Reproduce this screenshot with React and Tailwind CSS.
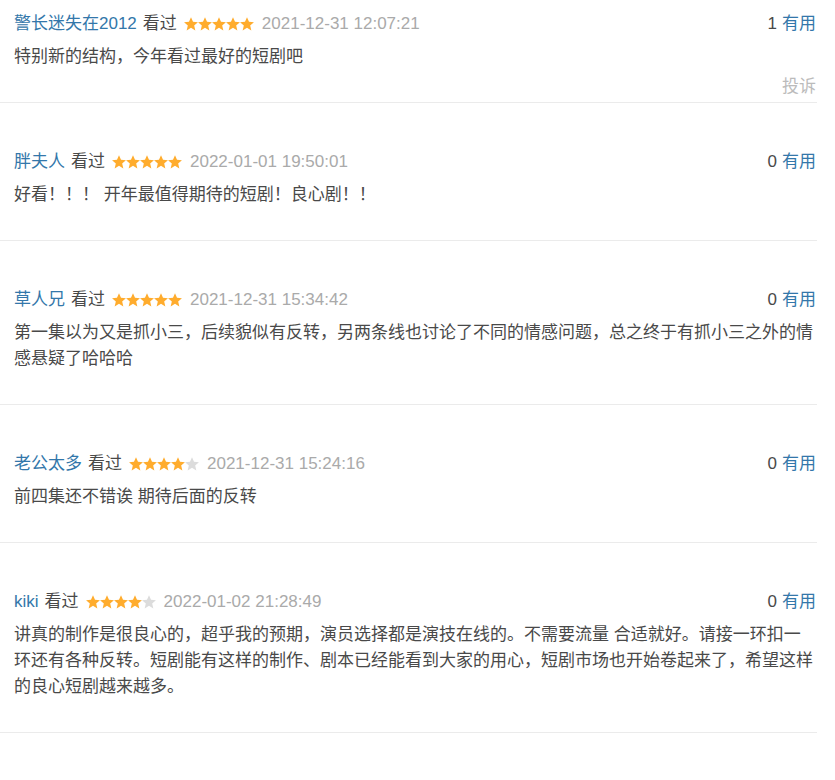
import React from 'react';

const reviews = [
  {
    id: 1,
    name: '警长迷失在2012',
    rating: 5,
    time: '2021-12-31 12:07:21',
    votes: 1,
    content: '特别新的结构，今年看过最好的短剧吧',
    showReport: true,
  },
  {
    id: 2,
    name: '胖夫人',
    rating: 5,
    time: '2022-01-01 19:50:01',
    votes: 0,
    content: '好看！！！ 开年最值得期待的短剧！良心剧！！',
  },
  {
    id: 3,
    name: '草人兄',
    rating: 5,
    time: '2021-12-31 15:34:42',
    votes: 0,
    content:
      '第一集以为又是抓小三，后续貌似有反转，另两条线也讨论了不同的情感问题，总之终于有抓小三之外的情感悬疑了哈哈哈',
  },
  {
    id: 4,
    name: '老公太多',
    rating: 4,
    time: '2021-12-31 15:24:16',
    votes: 0,
    content: '前四集还不错诶 期待后面的反转',
  },
  {
    id: 5,
    name: 'kiki',
    rating: 4,
    time: '2022-01-02 21:28:49',
    votes: 0,
    content:
      '讲真的制作是很良心的，超乎我的预期，演员选择都是演技在线的。不需要流量 合适就好。请接一环扣一环还有各种反转。短剧能有这样的制作、剧本已经能看到大家的用心，短剧市场也开始卷起来了，希望这样的良心短剧越来越多。',
  },
];

function Star({ filled }) {
  return (
    <svg width="14" height="14" viewBox="1.2 1.5 21.6 21" className="shrink-0">
      <path
        d="M12 1.5l3.1 7.1 7.6.7-5.8 5 1.8 7.6L12 17.9l-6.7 4 1.8-7.6-5.8-5 7.6-.7z"
        fill={filled ? '#ffac2d' : '#dcdcdc'}
      />
    </svg>
  );
}

function Stars({ rating }) {
  return (
    <span className="flex items-center">
      {[1, 2, 3, 4, 5].map((n) => (
        <Star key={n} filled={n <= rating} />
      ))}
    </span>
  );
}

function ReviewItem({ review, first }) {
  return (
    <div
      className={`border-b border-[#ebebeb] pl-[14px] pr-[1px] ${
        first ? 'pt-[12px]' : 'pt-[47px]'
      }`}
    >
      {/* header: user, rating, time, votes */}
      <div className="flex items-center justify-between leading-[24px]">
        <div className="flex items-center">
          <a href="#" className="text-[#3377aa]">
            {review.name}
          </a>
          <span className="ml-[6px] text-[#494949]">看过</span>
          <span className="ml-[7px]">
            <Stars rating={review.rating} />
          </span>
          <span className="ml-[8px] text-[#aaaaaa]">{review.time}</span>
        </div>
        <div className="flex items-center">
          <span className="text-[#494949]">{review.votes}</span>
          <a href="#" className="ml-[5px] text-[#3377aa]">
            有用
          </a>
        </div>
      </div>
      <p className="mt-[8px] leading-[26px] text-[#494949]">{review.content}</p>
      {/* report link only shows on the first one (hover state) */}
      <div
        className={`pt-[5px] pb-[3px] text-right leading-[24px] text-[#bbbbbb] ${
          review.showReport ? '' : 'invisible'
        }`}
      >
        投诉
      </div>
    </div>
  );
}

export default function App() {
  return (
    <div
      className="w-[817px] bg-white text-[17px]"
      style={{ fontFamily: '"Liberation Sans", "Noto Sans CJK SC", sans-serif' }}
    >
      {reviews.map((r, i) => (
        <ReviewItem key={r.id} review={r} first={i === 0} />
      ))}
    </div>
  );
}
